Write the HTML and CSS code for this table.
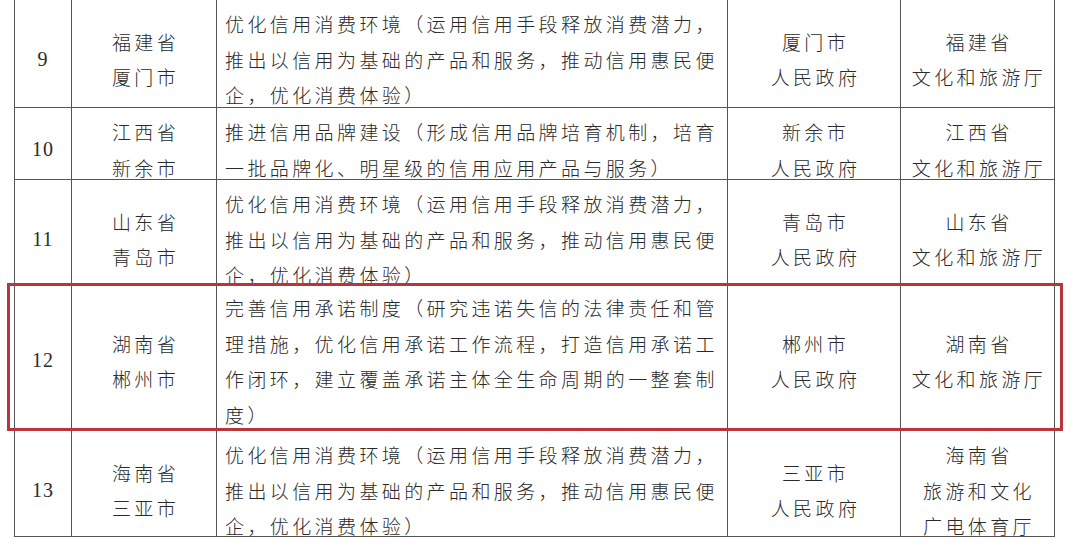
FILE: index.html
```html
<!DOCTYPE html>
<html lang="zh-CN">
<head>
<meta charset="utf-8">
<title>信用试点名单</title>
<link rel="stylesheet" href="styles.css">
</head>
<body>
<div class="sheet">
  <div class="row r9">
    <div class="cell num">9</div>
    <div class="cell ctr">福建省<br>厦门市</div>
    <div class="cell txt">优化信用消费环境（运用信用手段释放消费潜力，<br>推出以信用为基础的产品和服务，推动信用惠民便<br>企，优化消费体验）</div>
    <div class="cell ctr">厦门市<br>人民政府</div>
    <div class="cell ctr">福建省<br>文化和旅游厅</div>
  </div>
  <div class="row r10">
    <div class="cell num">10</div>
    <div class="cell ctr">江西省<br>新余市</div>
    <div class="cell txt">推进信用品牌建设（形成信用品牌培育机制，培育<br>一批品牌化、明星级的信用应用产品与服务）</div>
    <div class="cell ctr">新余市<br>人民政府</div>
    <div class="cell ctr">江西省<br>文化和旅游厅</div>
  </div>
  <div class="row r11">
    <div class="cell num">11</div>
    <div class="cell ctr">山东省<br>青岛市</div>
    <div class="cell txt">优化信用消费环境（运用信用手段释放消费潜力，<br>推出以信用为基础的产品和服务，推动信用惠民便<br>企，优化消费体验）</div>
    <div class="cell ctr">青岛市<br>人民政府</div>
    <div class="cell ctr">山东省<br>文化和旅游厅</div>
  </div>
  <div class="row r12 highlight">
    <div class="cell num">12</div>
    <div class="cell ctr">湖南省<br>郴州市</div>
    <div class="cell txt">完善信用承诺制度（研究违诺失信的法律责任和管<br>理措施，优化信用承诺工作流程，打造信用承诺工<br>作闭环，建立覆盖承诺主体全生命周期的一整套制<br>度）</div>
    <div class="cell ctr">郴州市<br>人民政府</div>
    <div class="cell ctr">湖南省<br>文化和旅游厅</div>
  </div>
  <div class="row r13">
    <div class="cell num">13</div>
    <div class="cell ctr">海南省<br>三亚市</div>
    <div class="cell txt">优化信用消费环境（运用信用手段释放消费潜力，<br>推出以信用为基础的产品和服务，推动信用惠民便<br>企，优化消费体验）</div>
    <div class="cell ctr">三亚市<br>人民政府</div>
    <div class="cell ctr">海南省<br>旅游和文化<br>广电体育厅</div>
  </div>
</div>
</body>
</html>
```

FILE: styles.css
```css
html, body {
  margin: 0;
  padding: 0;
  background: #ffffff;
}

.sheet {
  margin-left: 14px;
  width: 1041px;
  color: #2a2a2a;
  font-family: "Noto Sans CJK SC", "Noto Sans", sans-serif;
  font-weight: 300;
  font-size: 19px;
  line-height: 35.5px;
  letter-spacing: 3.4px;
}

.row {
  display: grid;
  grid-template-columns: 58px 145px 511px 173px 154px;
  border-bottom: 1px solid #555555;
  box-sizing: border-box;
}

.r9 { height: 108px; }
.r10 { height: 72px; }
.r11 { height: 104px; }
.r12 { height: 147px; }
.r13 { height: 106px; }

.cell {
  box-sizing: border-box;
  border-right: 1px solid #555555;
  display: flex;
  align-items: center;
  padding-top: 6px;
}

.cell.num {
  border-left: 1px solid #555555;
  justify-content: center;
  font-family: "Liberation Serif", "Times New Roman", serif;
  font-weight: 400;
  font-size: 20px;
  letter-spacing: 1px;
}

.cell.ctr {
  justify-content: center;
  text-align: center;
  padding-left: 3px;
}

.cell.txt {
  padding-left: 8px;
  white-space: nowrap;
}

.highlight {
  position: relative;
}

.highlight::after {
  content: "";
  position: absolute;
  left: -7px;
  right: -8px;
  top: -1px;
  bottom: -1px;
  border: 3px solid #b8353b;
  pointer-events: none;
}
```
